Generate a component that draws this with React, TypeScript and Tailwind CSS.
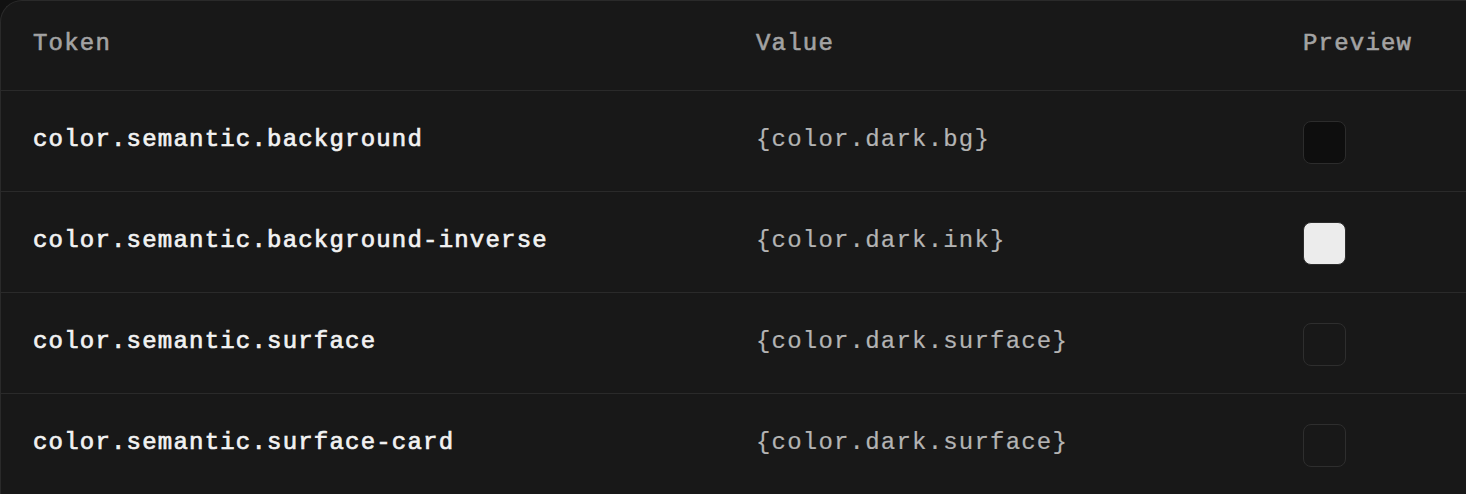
const rows = [
  { token: "color.semantic.background", value: "{color.dark.bg}", swatch: "bg-[#0e0e0e] border-[#2c2c2c]" },
  { token: "color.semantic.background-inverse", value: "{color.dark.ink}", swatch: "bg-[#ececec] border-[#2c2c2c]" },
  { token: "color.semantic.surface", value: "{color.dark.surface}", swatch: "bg-[#181818] border-[#2e2e2e]" },
  { token: "color.semantic.surface-card", value: "{color.dark.surface}", swatch: "bg-[#181818] border-[#2e2e2e]" },
];

export default function App() {
  return (
    <div className="w-[1466px] h-[494px] overflow-hidden bg-[#111111]">
      <div
        className="w-[1520px] bg-[#181818] border-l border-t border-[#2a2a2a] rounded-tl-[22px] text-[24px] tracking-[1.2px]"
        style={{ fontFamily: '"Liberation Mono", "DejaVu Sans Mono", monospace' }}
      >
        {/* header */}
        <div className="grid grid-cols-[723px_547px_1fr] h-[90px] items-center pl-8 pb-[3px] border-b border-[#2a2a2a] text-[#a3a3a3] [-webkit-text-stroke:0.6px_#a3a3a3]">
          <span>Token</span>
          <span>Value</span>
          <span>Preview</span>
        </div>

        {rows.map((row) => (
          <div
            key={row.token}
            className="grid grid-cols-[723px_547px_1fr] h-[101px] items-center pl-8 pb-[2px] border-b border-[#2a2a2a]"
          >
            <span className="text-[#f2f2f2] [-webkit-text-stroke:0.7px_#f2f2f2]">{row.token}</span>
            <span className="text-[#b4b4b4] [-webkit-text-stroke:0.2px_#b4b4b4]">{row.value}</span>
            <div className="pt-[4px]">
              <div className={`w-[43px] h-[43px] rounded-[8px] border ${row.swatch}`} />
            </div>
          </div>
        ))}
      </div>
    </div>
  );
}
